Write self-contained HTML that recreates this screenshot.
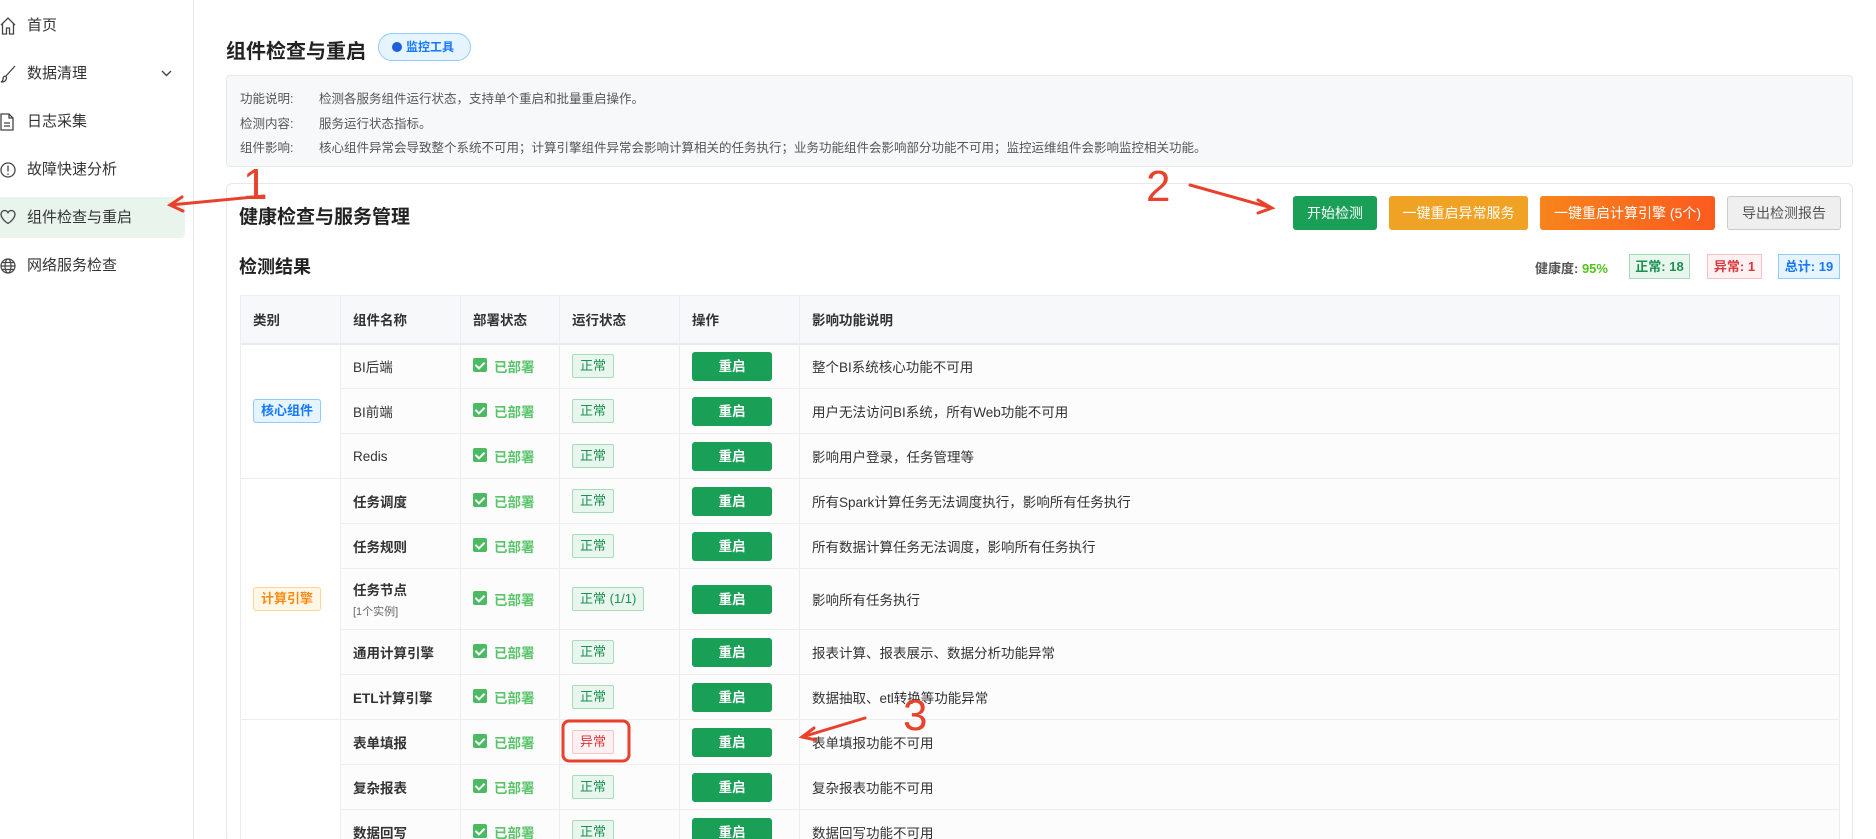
<!DOCTYPE html>
<html style="width:1876px;height:839px;overflow:hidden"><head><meta charset="utf-8"><style>
*{box-sizing:border-box;margin:0;padding:0}
body{width:1876px;height:839px;overflow:hidden;background:#fff;font-family:"Liberation Sans","Noto Sans CJK SC",sans-serif;color:#333;position:relative}
.side{position:absolute;left:0;top:0;width:194px;height:839px;border-right:1px solid #e5e5e5;background:#fff}
.mi{position:absolute;left:0;width:185px;height:41px;font-size:15px;color:#333;line-height:41px;padding-left:27px}
.mi svg{position:absolute;left:0;top:12px}
.mi.act{background:#e8f4ec;border-radius:0 4px 4px 0}
.abs{position:absolute}
.title{left:226px;top:35px;font-size:20px;font-weight:bold;color:#222;white-space:nowrap}
.badge{left:378px;top:33px;width:93px;height:28px;border:1px solid #91caff;background:#e6f4ff;border-radius:14px;color:#1677ff;font-size:12px;font-weight:bold;line-height:26px;padding-left:27px}
.badge:before{content:"";position:absolute;left:13px;top:8px;width:10px;height:10px;border-radius:50%;background:#1d5fd8}
.info{left:226px;top:75px;width:1627px;height:92px;background:#f7f8fa;border:1px solid #e8e8e8;border-radius:4px;font-size:12.5px;color:#555}
.info div{position:absolute;left:13px}
.info span{position:absolute;left:79px;white-space:nowrap}
.card{left:226px;top:183px;width:1627px;height:700px;border:1px solid #e8e8e8;border-radius:6px;background:#fff}
.h2{font-size:19px;font-weight:bold;color:#222}
.btn{position:absolute;top:196px;height:34px;border-radius:3px;color:#fff;font-size:14px;text-align:center;line-height:34px;white-space:nowrap}
.stat{position:absolute;top:254px;height:25px;font-size:13px;font-weight:bold;line-height:23px;text-align:center;border:1px solid;white-space:nowrap}
table{position:absolute;left:240px;top:295px;width:1600px;border-collapse:collapse;font-size:13.5px}
td,th{border:1px solid #ebedf0;text-align:left;padding:0 12px;color:#333}
th{height:48px;background:#f7f8fa;font-weight:bold;border-bottom:2px solid #e8eaee}
td{height:45px;background:#fcfcfc}
td.cat{background:#fff}
td.nm{font-weight:bold}
.ok{display:inline-block;color:#5ac46a;font-weight:bold;padding-left:21px;position:relative}
.ok:before{content:"";position:absolute;left:0;top:2px;width:14px;height:14px;background:#4cba63;border-radius:2px}
.ok:after{content:"";position:absolute;left:4px;top:4px;width:4px;height:7px;border:solid #fff;border-width:0 2px 2px 0;transform:rotate(45deg)}
.tag{display:inline-block;height:24px;line-height:22px;padding:0 7px;border:1px solid #a6dcbc;background:#e8f6ee;color:#1a8f50;font-size:13px;border-radius:2px}
.tag.err{border-color:#f5c2c7;background:#fff0f1;color:#d9363e}
.rb{display:inline-block;width:80px;height:29px;line-height:29px;background:#1a9f56;color:#fff;text-align:center;border-radius:3px;font-size:13.5px;font-weight:bold}
.ct{display:inline-block;height:24px;line-height:22px;padding:0 7px;font-size:13px;font-weight:bold;border:1px solid;border-radius:3px}
.red{color:#e8412c;font-size:44px;font-family:"Liberation Sans",sans-serif;line-height:1}
</style></head><body>
<div class="side">
<div class="mi" style="top:5px"><svg width="16" height="18" viewBox="0 0 16 18" fill="none" stroke="#444" stroke-width="1.3"><path d="M1 8L8 1l7 7M2.5 7v10h4v-6h3v6h4V7"/></svg>首页</div>
<div class="mi" style="top:53px"><svg width="16" height="18" viewBox="0 0 16 18" fill="none" stroke="#444" stroke-width="1.3"><path d="M15 1L6 11M6 11c-2 0-3 1-3 3s-2 3-2 3 3 0 4-1 2-3 1-5"/></svg>数据清理<svg style="left:161px;top:17px" width="11" height="7" viewBox="0 0 11 7" fill="none" stroke="#444" stroke-width="1.4"><path d="M1 1l4.5 4.5L10 1"/></svg></div>
<div class="mi" style="top:101px"><svg width="14" height="18" viewBox="0 0 14 18" fill="none" stroke="#444" stroke-width="1.3"><path d="M1 1h8l4 4v12H1zM9 1v4h4M4 10h6M4 13h6"/></svg>日志采集</div>
<div class="mi" style="top:149px"><svg width="16" height="18" viewBox="0 0 16 18" fill="none" stroke="#444" stroke-width="1.3"><circle cx="8" cy="9" r="7"/><path d="M8 4.5v6M8 12.5v1.5"/></svg>故障快速分析</div>
<div class="mi act" style="top:197px"><svg width="16" height="16" viewBox="0 0 16 16" fill="none" stroke="#444" stroke-width="1.3"><path d="M8 14.5S1 10 1 5.3C1 3 2.7 1.5 4.5 1.5 6 1.5 7.3 2.5 8 3.7 8.7 2.5 10 1.5 11.5 1.5 13.3 1.5 15 3 15 5.3 15 10 8 14.5 8 14.5z"/></svg>组件检查与重启</div>
<div class="mi" style="top:245px"><svg width="16" height="18" viewBox="0 0 16 18" fill="none" stroke="#444" stroke-width="1.2"><circle cx="8" cy="9" r="7"/><ellipse cx="8" cy="9" rx="3" ry="7"/><path d="M1 9h14M2 5.5h12M2 12.5h12"/></svg>网络服务检查</div>
</div>

<div class="abs title">组件检查与重启</div>
<div class="abs badge">监控工具</div>
<div class="abs info">
<div style="top:12px">功能说明:<span>检测各服务组件运行状态，支持单个重启和批量重启操作。</span></div>
<div style="top:37px">检测内容:<span>服务运行状态指标。</span></div>
<div style="top:61px">组件影响:<span>核心组件异常会导致整个系统不可用；计算引擎组件异常会影响计算相关的任务执行；业务功能组件会影响部分功能不可用；监控运维组件会影响监控相关功能。</span></div>
</div>
<div class="abs card" style="height:660px"></div>
<div class="abs h2" style="left:239px;top:202px">健康检查与服务管理</div>
<div class="btn" style="left:1293px;width:84px;background:#1a9f56">开始检测</div>
<div class="btn" style="left:1389px;width:139px;background:#efa224">一键重启异常服务</div>
<div class="btn" style="left:1540px;width:175px;background:linear-gradient(90deg,#f7841c,#fb5a1f)">一键重启计算引擎 (5个)</div>
<div class="btn" style="left:1727px;width:114px;background:#efefef;border:1px solid #ccc;color:#555;line-height:32px">导出检测报告</div>
<div class="abs h2" style="left:239px;top:253px;font-size:18px">检测结果</div>
<div class="abs" style="left:1535px;top:258px;font-size:13px;font-weight:bold;color:#555;white-space:nowrap">健康度: <span style="color:#52c41a">95%</span></div>
<div class="stat" style="left:1629px;width:61px;color:#1a8f50;background:#e8f6ee;border-color:#a6dcbc">正常: 18</div>
<div class="stat" style="left:1707px;width:55px;color:#d9363e;background:#fff0f1;border-color:#f5c2c7">异常: 1</div>
<div class="stat" style="left:1778px;width:62px;color:#1677ff;background:#e6f4ff;border-color:#91caff">总计: 19</div>

<table>
<tr><th style="width:100px">类别</th><th style="width:120px">组件名称</th><th style="width:99px">部署状态</th><th style="width:120px">运行状态</th><th style="width:120px">操作</th><th>影响功能说明</th></tr>
<tr><td class="cat" rowspan="3"><span class="ct" style="color:#1677ff;background:#e6f4ff;border-color:#91caff">核心组件</span></td><td class="nm" style="font-weight:normal">BI后端</td><td><span class="ok">已部署</span></td><td><span class="tag">正常</span></td><td><span class="rb">重启</span></td><td>整个BI系统核心功能不可用</td></tr>
<tr><td class="nm" style="font-weight:normal">BI前端</td><td><span class="ok">已部署</span></td><td><span class="tag">正常</span></td><td><span class="rb">重启</span></td><td>用户无法访问BI系统，所有Web功能不可用</td></tr>
<tr><td>Redis</td><td><span class="ok">已部署</span></td><td><span class="tag">正常</span></td><td><span class="rb">重启</span></td><td>影响用户登录，任务管理等</td></tr>
<tr><td class="cat" rowspan="5"><span class="ct" style="color:#fa8c16;background:#fff7e6;border-color:#ffd591">计算引擎</span></td><td class="nm">任务调度</td><td><span class="ok">已部署</span></td><td><span class="tag">正常</span></td><td><span class="rb">重启</span></td><td>所有Spark计算任务无法调度执行，影响所有任务执行</td></tr>
<tr><td class="nm">任务规则</td><td><span class="ok">已部署</span></td><td><span class="tag">正常</span></td><td><span class="rb">重启</span></td><td>所有数据计算任务无法调度，影响所有任务执行</td></tr>
<tr><td class="nm" style="height:61px">任务节点<div style="font-weight:normal;font-size:11px;color:#666;margin-top:4px">[1个实例]</div></td><td><span class="ok">已部署</span></td><td><span class="tag">正常 (1/1)</span></td><td><span class="rb">重启</span></td><td>影响所有任务执行</td></tr>
<tr><td class="nm">通用计算引擎</td><td><span class="ok">已部署</span></td><td><span class="tag">正常</span></td><td><span class="rb">重启</span></td><td>报表计算、报表展示、数据分析功能异常</td></tr>
<tr><td class="nm">ETL计算引擎</td><td><span class="ok">已部署</span></td><td><span class="tag">正常</span></td><td><span class="rb">重启</span></td><td>数据抽取、etl转换等功能异常</td></tr>
<tr><td class="cat" rowspan="3"></td><td class="nm">表单填报</td><td><span class="ok">已部署</span></td><td><span class="tag err">异常</span></td><td><span class="rb">重启</span></td><td>表单填报功能不可用</td></tr>
<tr><td class="nm">复杂报表</td><td><span class="ok">已部署</span></td><td><span class="tag">正常</span></td><td><span class="rb">重启</span></td><td>复杂报表功能不可用</td></tr>
<tr><td class="nm">数据回写</td><td><span class="ok">已部署</span></td><td><span class="tag">正常</span></td><td><span class="rb">重启</span></td><td>数据回写功能不可用</td></tr>
</table>

<svg class="abs" style="left:0;top:0" width="1876" height="839" fill="none" stroke="#e8412c" stroke-width="3" stroke-linecap="round">
<path d="M264 196L170 205M182 197l-12 8 13 6"/>
<path d="M1190 185L1272 208M1258 200l14 8-14 5"/>
<path d="M865 718L802 737M814 728l-12 9 14 3"/>
<rect x="563" y="721" width="66" height="40" rx="6"/>
</svg>
<div class="abs red" style="left:243px;top:163px">1</div>
<div class="abs red" style="left:1146px;top:165px">2</div>
<div class="abs red" style="left:903px;top:694px">3</div>
</body></html>
